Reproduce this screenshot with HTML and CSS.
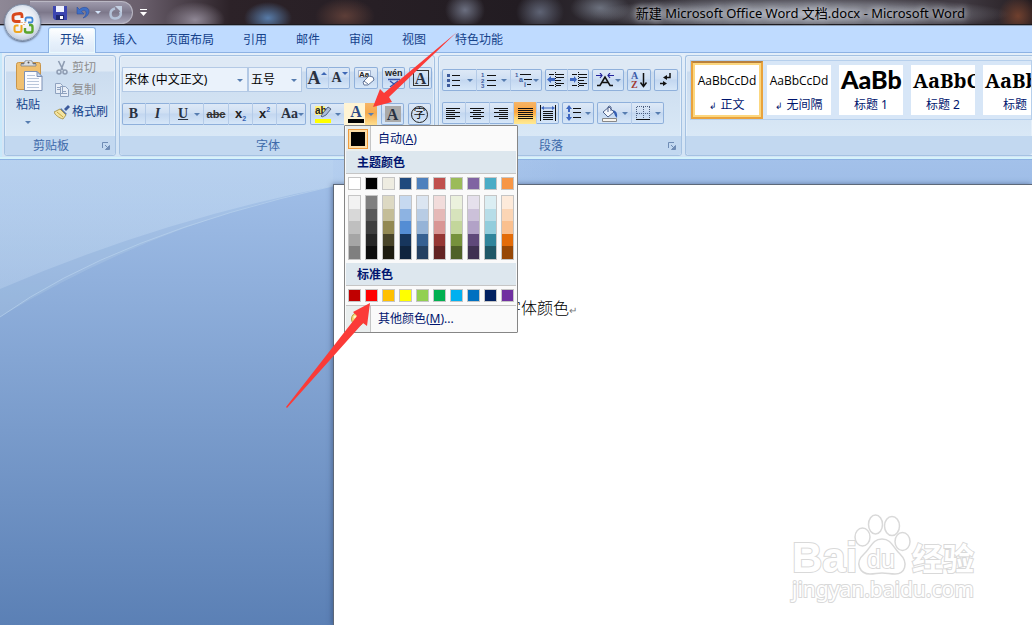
FILE: index.html
```html
<!DOCTYPE html>
<html lang="zh-CN">
<head>
<meta charset="utf-8">
<title>新建 Microsoft Office Word 文档.docx - Microsoft Word</title>
<link rel="stylesheet" href="styles.css">
</head>
<body>
<header class="titlebar">
  <div class="qat">
    <button class="plain" aria-label="保存"><svg width="14" height="14" viewBox="0 0 14 14"><path d="M0 0h14v14H2l-2-2z" fill="#3c45b0"/><path d="M3 0h8v6H3z" fill="#eef1ff"/><path d="M3 9h8v5H3z" fill="#20286e"/><path d="M7 10h3v3H7z" fill="#fff"/></svg></button>
    <button class="plain undo" aria-label="撤销"><svg width="14" height="14" viewBox="0 0 14 14"><path d="M1 1v7h7L5.500 5.500C8 3 11 5 10 8c-.5 2-2 3-3 4 4-1 6-4 6-7 0-4-6-5-9.500-1.500z" fill="#3f6fc4" stroke="#24479a" stroke-width=".5"/></svg></button>
    <i class="caret light"></i>
    <button class="plain redo" aria-label="恢复"><svg width="14" height="14" viewBox="0 0 14 14"><path d="M6 2.500C0 4 0 12 6 12.500c5 0 7-4 5-7" fill="none" stroke="#b4c2d8" stroke-width="2.500"/><path d="M6 0h7v7z" fill="#c3cfe1"/></svg></button>
  </div>
  <button class="plain qat-more" aria-label="自定义快速访问工具栏"><svg width="7" height="7" viewBox="0 0 7 7"><path d="M0 0h7v1H0zM0 3h7L3.500 7z" fill="#fff"/></svg></button>
  <h1 class="title">新建 Microsoft Office Word 文档.docx - Microsoft Word</h1>
</header>
<button class="office" aria-label="Office 按钮"><svg width="24" height="24" viewBox="0 0 24 24" fill="none"><path d="M9.500 10.500H5Q2 10.500 2 8V5.500Q2 3.500 5 3l4-.5Q11 2.500 11 5v2" stroke="#d8481c" stroke-width="2.800"/><path d="M14.500 10.500V8q0-1.500 1.500-1.500h3.500q2 0 2 2v1.500q0 1.500-1.500 1.500h-3" stroke="#3d86d6" stroke-width="1.800"/><path d="M10.500 14v5q0 2-2 2H5.500q-2 0-2-2v-2.500q0-2 2-2h2" stroke="#efa621" stroke-width="2"/><path d="M14 17v2.500q0 2 2 2h3.500q2 0 2-2V16q0-2-2-2H18" stroke="#5aa52d" stroke-width="2.400"/><path d="M10.500 11.500h1M13.500 11.500h1M12.500 13.500h1" stroke="#ce7a30"/></svg></button>
<nav class="tabs">
  <a href="#" class="tab active">开始</a><a href="#" class="tab">插入</a><a href="#" class="tab">页面布局</a><a href="#" class="tab">引用</a><a href="#" class="tab">邮件</a><a href="#" class="tab">审阅</a><a href="#" class="tab">视图</a><a href="#" class="tab">特色功能</a>
</nav>
<section class="ribbon">
  <div class="group clipboard">
    <div class="clip-body">
      <button class="plain paste"><svg width="28" height="32" viewBox="0 0 28 32"><rect x=".5" y="2.500" width="24" height="27" rx="2" fill="#f0c070" stroke="#c9954a"/><path d="M5 3h15v3H5z" fill="#6e6a65"/><path d="M8 4q0-4 4.500-4T17 4h3v2H5V4z" fill="#d9dde2" stroke="#74777c" stroke-width=".7"/><circle cx="12.500" cy="2.500" r="1" fill="#555"/><path d="M8.500 11.500H21l5 5v14H8.500z" fill="#fbfcff" stroke="#7d91b5"/><path d="M21 11.500v5h5z" fill="#c9d8ee" stroke="#7d91b5"/><path d="M11 15.500h8M11 18.500h12M11 21.500h12M11 24.500h12M11 27.500h12" stroke="#b9c6da"/></svg><span>粘贴</span><i class="caret"></i></button>
      <div class="clip-list">
        <button class="plain off" disabled><svg width="16" height="16" viewBox="0 0 16 16" fill="none" stroke="#8e9cb2"><path d="M4.500 1l4.500 9M10.500 1L7 10" stroke-width="1.600"/><circle cx="5" cy="12" r="2" stroke-width="1.500"/><circle cx="11" cy="12" r="2" stroke-width="1.500"/></svg>剪切</button>
        <button class="plain off" disabled><svg width="16" height="16" viewBox="0 0 16 16" fill="#e6edf7" stroke="#8fa2bf"><path d="M1.500 1.500h5l2 2v8h-7zM6.500 4.500h5l3 3v7h-8z"/><path d="M3 5.500h3M3 7.500h3M8 9.500h4M8 11.500h5"/></svg>复制</button>
        <button class="plain"><svg width="16" height="16" viewBox="0 0 16 16"><path d="M10 5l4-4 2 2-4 4z" fill="#3c5a9c"/><path d="M7 4l6 6-2 1-5-5z" fill="#5b77ac"/><path d="M6 5l6 6-3 4c-4-1-8-4-9-7z" fill="#f3e3a0" stroke="#a08a3c" stroke-width=".8"/><path d="M3 8l6 5" stroke="#c7a73f"/></svg>格式刷</button>
      </div>
    </div>
    <div class="label">剪贴板<svg class="launch" width="8" height="8" viewBox="0 0 8 8"><path d="M.5 6V.5H6" fill="none" stroke="#6f8cb5"/><path d="M3 3l3 3M7.500 3.500v4h-4z" fill="#6f8cb5" stroke="#6f8cb5"/></svg></div>
  </div>

  <div class="group font">
    <div class="rows">
      <div class="row">
        <span class="combo wide"><select aria-label="字体"><option>宋体 (中文正文)</option></select></span>
        <span class="combo narrow"><select aria-label="字号"><option>五号</option></select></span>
        <div class="set after"><button class="b22 serif big" aria-label="增大字体">A<i class="tri up"></i></button><button class="b22 serif" aria-label="缩小字体">A<i class="tri"></i></button></div>
        <div class="set"><button class="b24" aria-label="清除格式"><svg width="20" height="20" viewBox="0 0 20 20"><path d="M2.500 2.500h12v7h-12z" fill="#f5f8fd" stroke="#9fb1cf"/><text x="3" y="9" font-size="8" font-weight="700" fill="#222">Aa</text><path d="M7 14l6-6 4 1 1 3-6 5-4 0z" fill="#fff" stroke="#63769a"/><path d="M8 13l4 3" stroke="#63769a"/></svg></button></div>
        <div class="set"><button class="b23" aria-label="拼音指南"><svg width="20" height="20" viewBox="0 0 20 20"><text x="1" y="8" font-size="9" font-weight="700" fill="#222">wén</text><path d="M4 11.500h12M6 13l8 6M14 13l-8 6" fill="none" stroke="#3654ae" stroke-width="1.500"/></svg></button></div>
        <div class="set"><button class="b23 serif" aria-label="字符边框"><span class="boxed">A</span></button></div>
      </div>
      <div class="row">
        <div class="set"><button class="b23 serif">B</button><button class="b24 serif it">I</button><button class="b34 serif"><u>U</u><i class="caret"></i></button><button class="b25 strike">abc</button><button class="b24 sub">x<sub>2</sub></button><button class="b24 sub">x<sup>2</sup></button><button class="b30 serif">Aa<i class="caret"></i></button></div>
        <div class="set"><button class="b34" aria-label="突出显示"><svg width="18" height="18" viewBox="0 0 18 18"><path d="M1 1h10v9H1z" fill="#fff27a"/><text x="1" y="9" font-size="10" font-weight="700" fill="#222">ab</text><path d="M7 11l2-3 5-6 3 2-5 6-4 2z" fill="#a9bddb" stroke="#3b4a68" stroke-width=".8"/><path d="M1 14h16v4H1z" fill="#ffff00"/></svg><i class="caret"></i></button>
          <div class="anchor">
            <button class="b33 hot" aria-label="字体颜色" aria-expanded="true"><span class="ink">A</span><i class="caret"></i></button>
            <div class="menu">
              <button class="item"><span class="gutter"><b class="chosen"></b></span><span>自动(<u>A</u>)</span></button>
              <h2>主题颜色</h2>
              <div class="sw">
                <b style="background:#ffffff"></b><b style="background:#000000"></b><b style="background:#eeece1"></b><b style="background:#1f497d"></b><b style="background:#4f81bd"></b><b style="background:#c0504d"></b><b style="background:#9bbb59"></b><b style="background:#8064a2"></b><b style="background:#4bacc6"></b><b style="background:#f79646"></b>
              </div>
              <div class="sw shades">
                <span><b style="background:#f2f2f2"></b><b style="background:#d8d8d8"></b><b style="background:#bfbfbf"></b><b style="background:#a5a5a5"></b><b style="background:#7f7f7f"></b></span>
                <span><b style="background:#7f7f7f"></b><b style="background:#595959"></b><b style="background:#3f3f3f"></b><b style="background:#262626"></b><b style="background:#0c0c0c"></b></span>
                <span><b style="background:#ddd9c3"></b><b style="background:#c4bd97"></b><b style="background:#938953"></b><b style="background:#494429"></b><b style="background:#1d1b10"></b></span>
                <span><b style="background:#c6d9f0"></b><b style="background:#8db3e2"></b><b style="background:#548dd4"></b><b style="background:#17365d"></b><b style="background:#0f243e"></b></span>
                <span><b style="background:#dbe5f1"></b><b style="background:#b8cce4"></b><b style="background:#95b3d7"></b><b style="background:#366092"></b><b style="background:#244061"></b></span>
                <span><b style="background:#f2dcdb"></b><b style="background:#e5b9b7"></b><b style="background:#d99694"></b><b style="background:#953734"></b><b style="background:#632423"></b></span>
                <span><b style="background:#ebf1dd"></b><b style="background:#d7e3bc"></b><b style="background:#c3d69b"></b><b style="background:#76923c"></b><b style="background:#4f6128"></b></span>
                <span><b style="background:#e5e0ec"></b><b style="background:#ccc1d9"></b><b style="background:#b2a2c7"></b><b style="background:#5f497a"></b><b style="background:#3f3151"></b></span>
                <span><b style="background:#dbeef3"></b><b style="background:#b7dde8"></b><b style="background:#92cddc"></b><b style="background:#31859b"></b><b style="background:#205867"></b></span>
                <span><b style="background:#fdeada"></b><b style="background:#fbd5b5"></b><b style="background:#fac08f"></b><b style="background:#e36c09"></b><b style="background:#974806"></b></span>
              </div>
              <h2>标准色</h2>
              <div class="sw">
                <b style="background:#c00000"></b><b style="background:#ff0000"></b><b style="background:#ffc000"></b><b style="background:#ffff00"></b><b style="background:#92d050"></b><b style="background:#00b050"></b><b style="background:#00b0f0"></b><b style="background:#0070c0"></b><b style="background:#002060"></b><b style="background:#7030a0"></b>
              </div>
              <button class="item more"><span class="gutter"><svg width="16" height="16" viewBox="0 0 16 16"><circle cx="8" cy="8" r="6.500" fill="#f6dc74" stroke="#b99a3d"/><circle cx="5" cy="6" r="1.500" fill="#fff7c9"/><circle cx="11" cy="11" r="1.500" fill="#d5a521"/></svg></span><span>其他颜色(<u>M</u>)...</span></button>
            </div>
          </div>
        </div>
        <div class="set"><button class="b23 serif" aria-label="字符底纹"><span class="shaded">A</span></button></div>
        <div class="set"><button class="b23" aria-label="带圈字符"><span class="ring">字</span></button></div>
      </div>
    </div>
    <div class="label">字体</div>
  </div>

  <div class="group para">
    <div class="rows">
      <div class="row">
        <div class="set"><button class="b34" aria-label="项目符号"><svg width="16" height="16" viewBox="0 0 16 16"><path d="M6 3.500h8M6 8.500h8M6 13.500h8" stroke="#111"/><path d="M1 2h3v3H1zM1 7h3v3H1zM1 12h3v3H1z" fill="#3d5a9b"/></svg><i class="caret"></i></button><button class="b34" aria-label="编号"><svg width="16" height="16" viewBox="0 0 16 16"><path d="M6 3.500h9M6 8.500h9M6 13.500h9" stroke="#111"/><text x="0" y="5" font-size="6" font-weight="700" fill="#3d5a9b">1</text><text x="0" y="11" font-size="6" font-weight="700" fill="#3d5a9b">2</text><text x="0" y="16" font-size="6" font-weight="700" fill="#3d5a9b">3</text></svg><i class="caret"></i></button><button class="b32" aria-label="多级列表"><svg width="18" height="16" viewBox="0 0 18 16"><path d="M5 2.500h11M9 7.500h8M12 12.500h4" stroke="#111"/><text x="0" y="5" font-size="6" font-weight="700" fill="#3d5a9b">1</text><text x="4" y="10" font-size="7" font-weight="700" fill="#3d5a9b">a</text><text x="9" y="15" font-size="7" font-weight="700" fill="#3d5a9b">i</text></svg><i class="caret"></i></button></div>
        <div class="set"><button class="b22" aria-label="减少缩进量"><svg width="18" height="16" viewBox="0 0 18 16"><path d="M2 2.500h5M9 2.500h8M9 5.500h8M9 8.500h5M9 11.500h8M2 13.500h5M9 13.500h5" stroke="#111"/><path d="M8.500 0v16" stroke="#111" stroke-dasharray="1 1"/><path d="M0 7.500L4 4v2h4v3H4v2z" fill="#3e67c0"/></svg></button><button class="b22" aria-label="增加缩进量"><svg width="18" height="16" viewBox="0 0 18 16"><path d="M2 2.500h5M9 2.500h8M9 5.500h8M9 8.500h5M9 11.500h8M2 13.500h5M9 13.500h5" stroke="#111"/><path d="M8.500 0v16" stroke="#111" stroke-dasharray="1 1"/><path d="M7 7.500L4 4v2H0v3h4v2z" fill="#3e67c0"/></svg></button></div>
        <div class="set"><button class="b32" aria-label="中文版式"><svg width="18" height="14" viewBox="0 0 18 14"><path d="M1 12.500h3L9 4l5 8.500h3M6 9.500h6" fill="none" stroke="#111" stroke-width="1.500"/><path d="M0 2.500h6M4 0l2 2.500L4 5M18 2.500h-6M14 0l-2 2.500L14 5" fill="none" stroke="#22229c" stroke-width="1.200"/></svg><i class="caret"></i></button></div>
        <div class="set"><button class="b24" aria-label="排序"><svg width="18" height="18" viewBox="0 0 18 18"><text x="1" y="8" font-size="10" class="slab" fill="#3c5ba8">A</text><text x="1" y="17" font-size="10" class="slab" fill="#a23a34">Z</text><path d="M13.500 2v13M10.500 11.500l3 4 3-4" stroke="#111" fill="none" stroke-width="1.500"/></svg></button></div>
        <div class="set"><button class="b24" aria-label="显示编辑标记"><svg width="14" height="14" viewBox="0 0 14 14"><path d="M11 0v4.500H6M1 10.500h5" fill="none" stroke="#111" stroke-width="1.500"/><path d="M4 4.500L8 2v5zM8 10.500L4 8v5z" fill="#111"/></svg></button></div>
      </div>
      <div class="row">
        <div class="set"><button class="b23" aria-label="左对齐"><svg width="15" height="13" viewBox="0 0 15 13"><path d="M0 1.500h14M0 3.500h9M0 5.500h14M0 7.500h9M0 9.500h14M0 11.500h9" stroke="#111"/></svg></button><button class="b24" aria-label="居中"><svg width="15" height="13" viewBox="0 0 15 13"><path d="M0 1.500h14M3 3.500h8M0 5.500h14M3 7.500h8M0 9.500h14M3 11.500h8" stroke="#111"/></svg></button><button class="b24" aria-label="右对齐"><svg width="15" height="13" viewBox="0 0 15 13"><path d="M0 1.500h14M5 3.500h9M0 5.500h14M5 7.500h9M0 9.500h14M5 11.500h9" stroke="#111"/></svg></button><button class="b23 on" aria-label="两端对齐"><svg width="15" height="13" viewBox="0 0 15 13"><path d="M0 1.500h15M0 3.500h15M0 5.500h15M0 7.500h15M0 9.500h15M0 11.500h15" stroke="#111"/></svg></button><button class="b23" aria-label="分散对齐"><svg width="16" height="16" viewBox="0 0 16 16"><path d="M.5 0v16M15.500 0v16M3 6.500h10M3 8.500h10M3 10.500h10M3 12.500h10M3 14.500h10" stroke="#111"/><path d="M1 3l3-2v1.500h8V1l3 2-3 2V3.500H4V5z" fill="#3e67c0"/></svg></button></div>
        <div class="set"><button class="b32" aria-label="行距"><svg width="16" height="16" viewBox="0 0 16 16"><path d="M7 3.500h8M7 7.500h8M7 12.500h8" stroke="#111"/><path d="M3 0L6 4H4v3H2V4H0zM2 9h2v3h2l-3 4-3-4h2z" fill="#3e67c0"/></svg><i class="caret"></i></button></div>
        <div class="set"><button class="b34" aria-label="底纹"><svg width="17" height="17" viewBox="0 0 17 17"><path d="M2 7l6-5 5 5-6 5z" fill="#f4f7fc" stroke="#4e618a"/><path d="M7 7V2q1-2 3 0v4" fill="none" stroke="#4e618a"/><path d="M12 5q5 1 4 8-2-1-3-5z" fill="#355fb3"/><path d="M1.500 13.500h14v3h-14z" fill="#f7f4ee" stroke="#888"/></svg><i class="caret"></i></button><button class="b33" aria-label="边框"><svg width="15" height="15" viewBox="0 0 15 15"><path d="M.5 1v12M7.500 1v12M13.500 1v12M1 .5h13M1 7.500h13" stroke="#4d5f80" stroke-dasharray="1 1"/><path d="M0 13.500h14" stroke="#111"/></svg><i class="caret"></i></button></div>
      </div>
    </div>
    <div class="label">段落<svg class="launch" width="8" height="8" viewBox="0 0 8 8"><path d="M.5 6V.5H6" fill="none" stroke="#6f8cb5"/><path d="M3 3l3 3M7.500 3.500v4h-4z" fill="#6f8cb5" stroke="#6f8cb5"/></svg></div>
  </div>

  <div class="group styles">
    <div class="gallery">
      <button class="style sel"><span class="demo">AaBbCcDd</span><span class="name"><small>↲</small> 正文</span></button>
      <button class="style"><span class="demo">AaBbCcDd</span><span class="name"><small>↲</small> 无间隔</span></button>
      <button class="style"><span class="demo h1">AaBb</span><span class="name">标题 1</span></button>
      <button class="style"><span class="demo h2">AaBbC</span><span class="name">标题 2</span></button>
      <button class="style"><span class="demo h2">AaBbC</span><span class="name">标题</span></button>
    </div>
    <div class="label"></div>
  </div>
</section>
<main class="workspace">
  <svg class="swoosh" width="560" height="160" viewBox="0 0 560 160" aria-hidden="true">
    <defs>
      <linearGradient id="g" x1="0" y1="0" x2="0" y2="1"><stop offset="0" stop-color="#c6dcf4" stop-opacity=".5"/><stop offset="1" stop-color="#c6dcf4" stop-opacity=".3"/></linearGradient>
      <linearGradient id="h"><stop offset="0" stop-color="#c6dcf4" stop-opacity=".5"/><stop offset="1" stop-color="#c6dcf4" stop-opacity="0"/></linearGradient>
    </defs>
    <path d="M0 0H333V27Q160 62 0 158z" fill="#d5ebf0" opacity=".15"/>
    <path d="M0 0H333V27Q160 61 0 130z" fill="url(#g)"/>
    <path d="M333 0H560V27H333z" fill="url(#h)"/>
    <path d="M0 158Q115 76 333 27" fill="none" stroke="#bdd5ef" opacity=".6"/>
  </svg>
  <article class="page">
    <p>字体颜色<small>↵</small></p>
    <svg class="mark" width="200" height="100" viewBox="0 0 200 100">
      <g fill="#fff" stroke="#d9d9d9" stroke-width="2">
        <text x="4" y="59" font-size="42" class="bold">Bai</text><text x="124" y="57" font-size="31" class="bold cjk">经验</text>
        <g stroke-width="1.500"><ellipse cx="74.500" cy="24" rx="7.500" ry="9"/><ellipse cx="87.500" cy="11.500" rx="7" ry="9.500"/><ellipse cx="104" cy="13" rx="7.500" ry="9.500"/><ellipse cx="114.500" cy="28.500" rx="7.500" ry="9"/>
        <path d="M94 26c-10 0-11 9-18 15-10 9-4 20 6 20 5 0 7-1 12-1s8 1 13 1c10 0 14-11 5-20-7-6-8-15-18-15z"/></g>
        <text x="79" y="55" font-size="25">du</text>
        <text x="4" y="84" font-size="21" class="url">jingyan.baidu.com</text>
      </g>
    </svg>
  </article>
</main>
<svg class="arrows" width="200" height="400" viewBox="280 20 200 400" aria-hidden="true"><g fill="#fb3b38"><path d="M373 107L380 89L384 93L457 32L389 97L392 102z"/><path d="M370 303L353 312L357 316L286 407L287 408L363 323L367 326z"/></g></svg>
</body>
</html>
```

FILE: styles.css
```css
* { box-sizing: border-box; }
body {
  margin: 0; min-height: 100vh; display: flex; flex-direction: column; position: relative; overflow: hidden;
  font: 12px/16px "Noto Sans", "Noto Sans CJK SC", sans-serif; color: #15428b; background: #bfdbff;
}
button { font: inherit; color: inherit; padding: 0; margin: 0; border: 0; background: none; display: flex; align-items: center; justify-content: center; }
svg { flex: none; }
svg text { font-family: "Liberation Sans", sans-serif; }
svg .slab { font-family: "Liberation Serif", serif; font-weight: 700; }

.titlebar {
  height: 26px; display: flex; align-items: center; padding: 0 67px 0 30px; border-bottom: 1px solid #8d9db3; box-shadow: inset 0 -1px #1c1a1e;
  background:
    radial-gradient(ellipse 210px 18px at 800px 14px, rgba(180,184,194,.9), rgba(160,165,176,.5) 60%, transparent),
    radial-gradient(ellipse 24px 16px at 268px 18px, #577ba8, transparent),
    radial-gradient(ellipse 30px 18px at 195px 20px, #8f8795, transparent),
    radial-gradient(ellipse 30px 18px at 345px 16px, #5d3e38, transparent),
    radial-gradient(ellipse 20px 18px at 465px 10px, #6b6f80, transparent),
    radial-gradient(ellipse 24px 20px at 540px 12px, #5e6374, transparent),
    radial-gradient(ellipse 30px 16px at 600px 8px, #6c717e, transparent),
    radial-gradient(ellipse 20px 20px at 1018px 16px, #70402e, transparent),
    linear-gradient(90deg, #8e8896, #6a5f6c 140px, #2c2228 230px, #221c22 520px, #3d3a42 700px, #403a42 960px, #241c20);
}
.qat {
  width: 103px; height: 23px; padding-left: 23px; display: flex; align-items: center; border: 1px solid #b9b7c3; border-left: 0;
  border-radius: 0 12px 12px 0; background: linear-gradient(#9d99ab, #7d788b 50%, #a7a5b8);
}
.undo { margin-left: 9px; }
.redo { margin-left: 8px; }
.caret { width: 0; height: 0; border: 3px solid transparent; border-top-color: #567db0; border-bottom: 0; flex: none; }
.light { border-top-color: #d3e4fa; margin-left: 5px; }
.qat-more { margin-left: 7px; }
.title { margin: 0 0 0 auto; font: 13px/20px "Noto Sans", "Noto Sans CJK SC", sans-serif; color: #000; white-space: nowrap; text-shadow: 0 0 6px #d8dce4, 0 0 8px #c6cad4; }
.office {
  position: absolute; left: 4px; top: 4px; z-index: 4; width: 37px; height: 37px; border-radius: 50%; border: 1px solid #8392aa;
  background: radial-gradient(circle at 50% 45%, #fff, #e6ebf3 50%, #b9c5d8 80%, #f2f6fb); box-shadow: 0 1px 2px #56657e;
}

.tabs { height: 27px; display: flex; gap: 5px; padding: 1px 0 0 48px; background: #bfdbff; border-bottom: 1px solid #8db2e3; }
.tab { height: 26px; padding: 0 12px; line-height: 25px; color: #15428b; text-decoration: none; white-space: nowrap; }
.active { border: 1px solid #8db2e3; border-bottom: 0; border-radius: 3px 3px 0 0; padding: 0 11px; line-height: 24px; background: linear-gradient(#fff, #e6f0fb 60%, #dde9f7); box-shadow: inset 0 0 1px 1px #e9fbff; }

.ribbon {
  position: relative; z-index: 2; display: flex; gap: 3px; padding: 2px 0 1px 4px; height: 106px;
  background: linear-gradient(#e3eef9, #d3e4f5); border-bottom: 2px solid #d5f3fb; box-shadow: 0 1px #8db2e3, inset 2px 0 #c8e8fa;
}
.group { flex: none; display: flex; flex-direction: column; justify-content: space-between; border: 1px solid #a5c2e2; border-radius: 3px; background: linear-gradient(#dee9f5 0 15px, #cbdcef 16px, #d9e8f6 80px); box-shadow: inset 0 0 0 1px #e4effa; }
.clipboard { width: 112px; }
.font { width: 316px; }
.para { width: 244px; }
.styles { flex: 1; min-width: 0; overflow: hidden; border-right: 0; border-radius: 3px 0 0 3px; }
.label { display: grid; grid-template-columns: 1fr auto 1fr; align-items: center; height: 19px; line-height: 18px; color: #3e6aaa; background: #c2d8f0; border-radius: 0 0 3px 3px; padding: 0 18px 0 0; }
.label::before { content: ""; }
.launch { justify-self: end; margin-right: -13px; }
.clipboard .label { grid-template-columns: 28px 1fr auto; }

.clip-body { display: flex; padding: 1px 0 0 11px; gap: 6px; }
.paste { flex-direction: column; justify-content: flex-start; align-items: flex-start; gap: 5px; width: 32px; padding-top: 3px; }
.paste .caret { margin: 3px 0 0 9px; }
.clip-list { display: flex; flex-direction: column; }
.clip-list button { height: 22px; gap: 2px; justify-content: flex-start; white-space: nowrap; }
.off { color: #8d8d8d; }

.rows { display: flex; flex-direction: column; gap: 11px; padding: 11px 0 0 2px; }
.row { display: flex; gap: 4px; height: 22px; }
.font .row:first-child { height: 25px; }
.para .rows { padding: 13px 0 0 3px; }
.para .row { gap: 3px; }
.combo { position: relative; height: 25px; border: 1px solid #b3c9e5; background: #eaf2fb; flex: none; }
.combo::after { content: ""; position: absolute; right: 4px; top: 11px; border: 3px solid transparent; border-top-color: #567db0; border-bottom: 0; }
.combo select { appearance: none; width: 100%; height: 23px; border: 0; padding: 0 0 0 2px; background: none; font: inherit; color: #000; }
.wide { width: 126px; }
.narrow { width: 54px; margin-left: -4px; }
.set { display: flex; height: 22px; box-shadow: inset 0 0 0 1px #8fb0db; border-radius: 2px; background: linear-gradient(#dfeaf7, #cfdff3 45%, #c3d7f0 50%, #d8e8f9); flex: none; }
.set > button + button { border-left: 1px solid #b4cbe8; }
.b22 { width: 22px; } .b23 { width: 23px; } .b24 { width: 24px; } .b25 { width: 25px; } .b30 { width: 30px; } .b32 { width: 32px; } .b33 { width: 33px; } .b34 { width: 34px; }
.b30, .b32, .b33, .b34 { justify-content: space-between; padding: 0 3px 0 4px; }
.serif { font: bold 14px/18px "Liberation Serif", serif; color: #2a3140; }
.serif u { padding-left: 4px; }
.big { font-size: 18px; }
.tri { border: 3px solid transparent; border-top-color: #3d67b5; border-bottom: 0; margin: -9px 0 0 0; }
.up { border-top: 0; border-bottom: 3px solid #3d67b5; }
.it { font-style: italic; }
.boxed { border: 1px solid #333; width: 16px; height: 16px; line-height: 15px; font-size: 16px; }
.shaded { background: #a9a9a9; width: 16px; height: 16px; line-height: 17px; font-size: 16px; }
.ring { width: 17px; height: 17px; border: 1px solid #222; border-radius: 50%; font-size: 12px; line-height: 14px; color: #111; }
.strike { font: bold 11px/18px "Liberation Sans", sans-serif; text-decoration: line-through; color: #333; }
.sub { font: bold 13px/18px "Liberation Sans", sans-serif; color: #222; }
.sub sub, .sub sup { font-size: 7px; line-height: 8px; color: #3560b0; }
.sub sub { align-self: flex-end; margin-bottom: 2px; }
.sub sup { align-self: flex-start; margin-top: 3px; }
.anchor { position: relative; display: flex; }
.hot { background: linear-gradient(90deg, #fff4d4 21px, transparent 21px), linear-gradient(#f6b566, #f5a94c 45%, #ffdf8e); }
.ink { font: bold 16px/14px "Liberation Serif", serif; color: #2d4b87; border-bottom: 4px solid #000; width: 16px; text-align: center; }
.on { background: linear-gradient(#f5b467, #fba640 45%, #ffd775 75%, #ffe993); }

.menu { position: absolute; z-index: 3; left: 0; top: 22px; width: 174px; border: 1px solid #868686; border-radius: 1px; padding: 0 1px; background: #fafafa; color: #00156e; }
.menu h2 { margin: 0; height: 23px; padding-left: 11px; font: bold 12px/23px "Noto Sans", "Noto Sans CJK SC", sans-serif; background: #dde7ee; border-bottom: 1px solid #c5c5c5; }
.item { height: 25px; width: 100%; justify-content: flex-start; gap: 7px; }
.gutter { width: 25px; height: 100%; display: flex; align-items: center; justify-content: center; background: #e9eeee; border-right: 1px solid #c5c5c5; }
.chosen { width: 20px; height: 20px; border: 1px solid #ef9b3d; box-shadow: inset 0 0 0 2px #fbdca6; background: #000; }
.sw { display: grid; grid-template-columns: repeat(10, 13px); gap: 4px; padding: 3px 2px; }
.sw > b { height: 13px; border: 1px solid #c5c5c5; }
.sw > span { border: 1px solid #c5c5c5; height: 65px; display: flex; flex-direction: column; }
.sw > span b { flex: 1; }
.shades { padding-top: 2px; }
.more { height: 27px; border-top: 1px solid #c5c5c5; }

.gallery { display: flex; margin: 4px 0 0 4px; height: 60px; border: 1px solid #b6cfec; background: #d7e6f7; overflow: hidden; }
.style { flex: none; width: 72px; height: 58px; padding: 4px; border: 0; flex-direction: column; color: #00156e; }
.style > span { background: #fff; width: 64px; flex: none; overflow: hidden; }
.sel { border: 2px solid #e9a33d; border-top-color: #b9803c; padding: 2px; background: #fcd77f; }
.demo { height: 30px; font: 12px/32px "Open Sans", sans-serif; color: #000; }
.name { height: 20px; line-height: 20px; white-space: nowrap; }
.name small { font-size: 9px; }
.demo.h1 { font: 900 25px/28px Lato, sans-serif; text-align: left; padding-left: 2px; }
.demo.h2 { font: bold 20px/32px "Noto Serif", "Liberation Serif", serif; text-align: left; padding-left: 2px; }

.workspace { flex: 1; position: relative; display: flex; padding: 25px 0 0 333px; background: linear-gradient(#a3c1ea, #5b80b5); }
.swoosh { position: absolute; left: 0; top: 0; }
.page { position: relative; flex: 1; background: #fff; border: 1px solid #5d6878; border-width: 1px 0 0 1px; box-shadow: -1px 0 5px rgba(40,60,100,.5); }
.page p { margin: 0; padding: 110px 0 0 171px; font: 16px/24px "Noto Sans CJK SC", sans-serif; font-weight: 300; color: #000; }
.page small { font-size: 10px; color: #777; }
.mark { position: absolute; right: 44px; bottom: 12px; }
.mark text { paint-order: stroke; }
.bold { font-weight: 700; }
.mark .cjk { font-family: "Noto Sans CJK SC", sans-serif; }
.mark .url { font-family: "Noto Sans", sans-serif; }
.arrows { position: absolute; left: 280px; top: 20px; z-index: 5; pointer-events: none; }
```
